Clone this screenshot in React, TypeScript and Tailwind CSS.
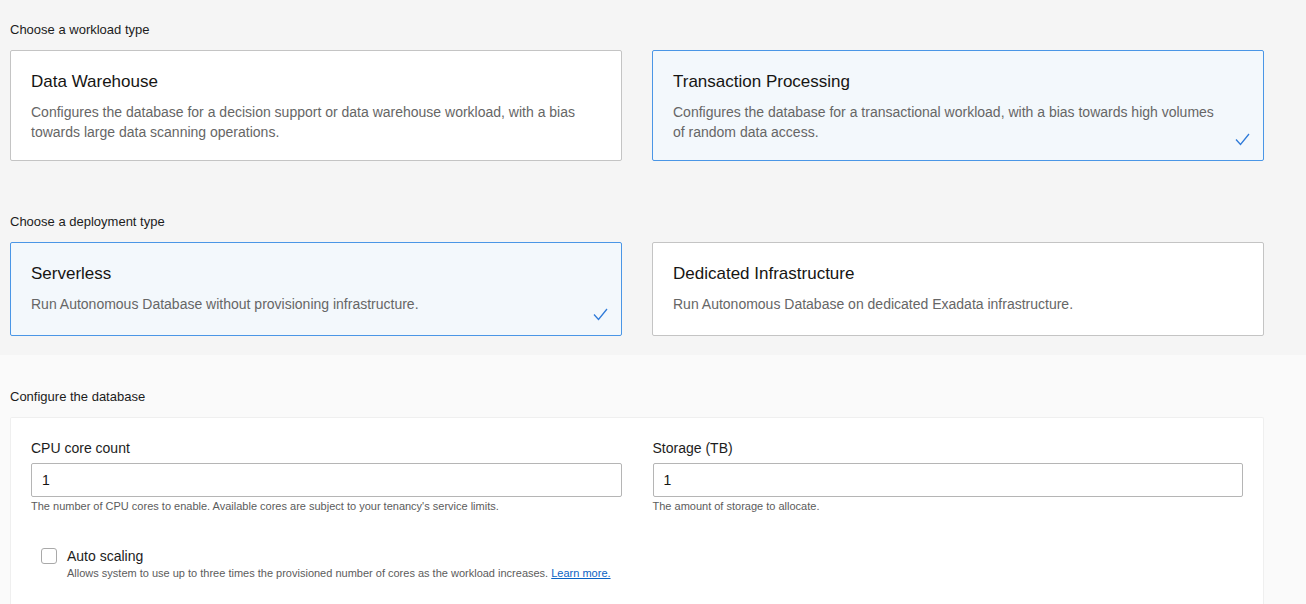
import { useState } from 'react';

interface Option {
  id: string;
  title: string;
  description: string;
}

const workloads: Option[] = [
  {
    id: 'dw',
    title: 'Data Warehouse',
    description:
      'Configures the database for a decision support or data warehouse workload, with a bias towards large data scanning operations.',
  },
  {
    id: 'tp',
    title: 'Transaction Processing',
    description:
      'Configures the database for a transactional workload, with a bias towards high volumes of random data access.',
  },
];

const deployments: Option[] = [
  {
    id: 'serverless',
    title: 'Serverless',
    description: 'Run Autonomous Database without provisioning infrastructure.',
  },
  {
    id: 'dedicated',
    title: 'Dedicated Infrastructure',
    description: 'Run Autonomous Database on dedicated Exadata infrastructure.',
  },
];

const font = { fontFamily: "'Liberation Sans', Arial, Helvetica, sans-serif" };

function Check() {
  return (
    <svg
      className="absolute right-[13px] bottom-[14px]"
      width="15"
      height="13"
      viewBox="0 0 15 13"
      fill="none"
    >
      <path d="M1 6.5 L5.5 11.5 L14 1" stroke="#2f7bd9" strokeWidth="1.3" />
    </svg>
  );
}

function OptionCard({
  option,
  selected,
  height,
  onSelect,
}: {
  option: Option;
  selected: boolean;
  height: string;
  onSelect: () => void;
}) {
  return (
    <div
      onClick={onSelect}
      className={`relative cursor-pointer rounded-[2px] border px-5 pt-[19px] ${height} ${
        selected ? 'border-[#4a96e6] bg-[#f3f8fc]' : 'border-[#c4c4c4] bg-white'
      }`}
    >
      <h3 className="text-[17px] leading-6 text-[#161513]">{option.title}</h3>
      <p className="mt-2 pr-6 text-[14px] leading-5 text-[#666666]">{option.description}</p>
      {selected && <Check />}
    </div>
  );
}

export default function App() {
  const [workload, setWorkload] = useState('tp');
  const [deployment, setDeployment] = useState('serverless');
  const [cpu, setCpu] = useState('1');
  const [storage, setStorage] = useState('1');
  const [autoScale, setAutoScale] = useState(false);

  return (
    <div className="min-h-[604px] bg-[#fafafa]" style={font}>
      {/* Workload + deployment */}
      <section className="bg-[#f5f5f5] pl-[10px] pr-[42px] pt-[22px] pb-[19px]">
        <h2 className="text-[13px] leading-4 text-[#1c1c1c]">Choose a workload type</h2>
        <div className="mt-3 grid grid-cols-2 gap-[30px]">
          {workloads.map((w) => (
            <OptionCard
              key={w.id}
              option={w}
              height="h-[111px]"
              selected={workload === w.id}
              onSelect={() => setWorkload(w.id)}
            />
          ))}
        </div>

        <h2 className="mt-[53px] text-[13px] leading-4 text-[#1c1c1c]">Choose a deployment type</h2>
        <div className="mt-3 grid grid-cols-2 gap-[30px]">
          {deployments.map((d) => (
            <OptionCard
              key={d.id}
              option={d}
              height="h-[94px]"
              selected={deployment === d.id}
              onSelect={() => setDeployment(d.id)}
            />
          ))}
        </div>
      </section>

      {/* Configure */}
      <section className="pl-[10px] pr-[42px] pt-[34px]">
        <h2 className="text-[13px] leading-4 text-[#1c1c1c]">Configure the database</h2>
        <div className="mt-3 rounded-t-[2px] border border-b-0 border-[#efefef] bg-white px-5 pt-5 pb-6">
          <div className="grid grid-cols-2 gap-[31px]">
            <div>
              <label className="block text-[14px] leading-5 text-[#1c1c1c]">CPU core count</label>
              <input
                value={cpu}
                onChange={(e) => setCpu(e.target.value)}
                className="mt-[5px] h-[34px] w-full rounded-[2px] border border-[#b5b5b5] bg-white px-[10px] text-[14px] text-[#161513] outline-none"
              />
              <p className="mt-[2px] text-[11px] leading-[14px] text-[#5c5c5c]">
                The number of CPU cores to enable. Available cores are subject to your tenancy's service limits.
              </p>
            </div>
            <div>
              <label className="block text-[14px] leading-5 text-[#1c1c1c]">Storage (TB)</label>
              <input
                value={storage}
                onChange={(e) => setStorage(e.target.value)}
                className="mt-[5px] h-[34px] w-full rounded-[2px] border border-[#b5b5b5] bg-white px-[10px] text-[14px] text-[#161513] outline-none"
              />
              <p className="mt-[2px] text-[11px] leading-[14px] text-[#5c5c5c]">The amount of storage to allocate.</p>
            </div>
          </div>

          <div className="mt-[34px] ml-[10px] flex gap-[10px]">
            <button
              onClick={() => setAutoScale(!autoScale)}
              className={`mt-[1px] h-[16px] w-[16px] shrink-0 rounded-[3px] border ${
                autoScale ? 'border-[#2f7bd9] bg-[#2f7bd9]' : 'border-[#a9a9a9] bg-white'
              }`}
            />
            <div>
              <div className="text-[14px] leading-[18px] text-[#1c1c1c]">Auto scaling</div>
              <p className="text-[11px] leading-[16px] text-[#5c5c5c]">
                Allows system to use up to three times the provisioned number of cores as the workload increases.{' '}
                <a href="#" className="text-[#0b63c4] underline">
                  Learn more.
                </a>
              </p>
            </div>
          </div>
        </div>
      </section>
    </div>
  );
}
